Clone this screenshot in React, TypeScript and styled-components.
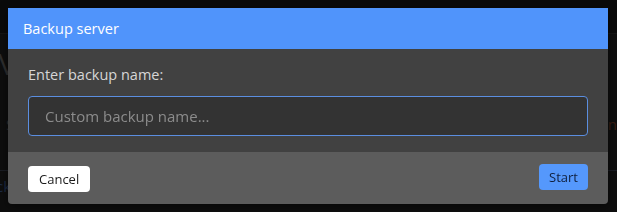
import React from "react";
import styled, { createGlobalStyle } from "styled-components";

const GlobalStyle = createGlobalStyle`
  html, body {
    margin: 0;
    padding: 0;
    background: #0c0c0c;
    font-family: "Open Sans", "Noto Sans", "Liberation Sans", sans-serif;
    overflow: hidden;
  }
`;

// dimmed page that sits behind the dialog
const Page = styled.div`
  width: 617px;
  height: 212px;
  overflow: hidden;
  background: #0e0e0e;
  color: #2b2b2b;
`;

const TopBar = styled.div`
  height: 33px;
  background: #0a0a0a;
  border-bottom: 1px solid #151515;
`;

const PageTitle = styled.div`
  font-size: 30px;
  line-height: 40px;
  margin: 10px 0 0 -6px;
  color: #2e2e2e;
  white-space: nowrap;
`;

const PageRow = styled.div`
  display: flex;
  justify-content: space-between;
  font-size: 15px;
  line-height: 20px;
  margin: 30px 0 0 6px;
  color: #2c2c2c;
`;

const WarnText = styled.span`
  color: #3a1d12;
  margin-right: -8px;
`;

const TabBar = styled.div`
  display: flex;
  align-items: center;
  margin-top: 36px;
  border-top: 1px solid #1a1d24;
  height: 30px;
  font-size: 15px;
`;

const Tab = styled.div<{ $active?: boolean }>`
  padding: 0 18px 0 0;
  margin-left: ${(p) => (p.$active ? "-22px" : "0")};
  color: ${(p) => (p.$active ? "#1c2a44" : "#2a2a2a")};
  border-right: ${(p) => (p.$active ? "1px solid #1f1f1f" : "none")};
  padding-left: ${(p) => (p.$active ? "0" : "18px")};
  line-height: 30px;
  white-space: nowrap;
`;

const Overlay = styled.div`
  position: fixed;
  inset: 0;
`;

const Dialog = styled.div`
  position: absolute;
  top: 8px;
  left: 8px;
  width: 600px;
  border-radius: 0 0 4px 4px;
  overflow: hidden;
  box-shadow: 0 2px 10px rgba(0, 0, 0, 0.5);
`;

const Header = styled.div`
  height: 41px;
  display: flex;
  align-items: center;
  padding: 0 15px;
  background: #5094fb;
  color: #ffffff;
  font-size: 14.5px;
`;

const Body = styled.div`
  background: #414141;
  padding: 16px 20px 16px;
  display: flex;
  flex-direction: column;
  gap: 11px;
`;

const Label = styled.label`
  color: #d6d6d6;
  font-size: 14.5px;
  line-height: 20px;
`;

const Input = styled.input`
  box-sizing: border-box;
  height: 40px;
  width: 100%;
  padding: 0 16px;
  background: #333333;
  border: 1px solid #5b8ee0;
  border-radius: 4px;
  color: #e0e0e0;
  font-family: inherit;
  font-size: 15px;
  outline: none;

  &::placeholder {
    color: #8c8c8c;
  }
`;

const Footer = styled.div`
  height: 52px;
  box-sizing: border-box;
  background: #5c5c5c;
  display: flex;
  align-items: center;
  justify-content: space-between;
  padding: 0 20px;
`;

const Button = styled.button<{ $primary?: boolean }>`
  height: 26px;
  padding: 0 ${(p) => (p.$primary ? "10px" : "11px")};
  border: none;
  border-radius: 4px;
  font-family: inherit;
  font-size: 13px;
  cursor: pointer;
  background: ${(p) => (p.$primary ? "#5598fc" : "#ffffff")};
  color: ${(p) => (p.$primary ? "#0f1f3d" : "#1a1a1a")};
  margin-top: ${(p) => (p.$primary ? "-2px" : "2px")};
`;

const App: React.FC = () => {
  return (
    <>
      <GlobalStyle />
      <Page>
        <TopBar />
        <PageTitle>Manage server</PageTitle>
        <PageRow>
          <span>Settings</span>
          <WarnText>Warning</WarnText>
        </PageRow>
        <TabBar>
          <Tab $active>Backup</Tab>
          <Tab>Manual backup per 24 hours: 1 / 100</Tab>
        </TabBar>
      </Page>
      <Overlay>
        <Dialog>
          <Header>Backup server</Header>
          <Body>
            <Label htmlFor="backup-name">Enter backup name:</Label>
            <Input id="backup-name" placeholder="Custom backup name..." />
          </Body>
          <Footer>
            <Button>Cancel</Button>
            <Button $primary>Start</Button>
          </Footer>
        </Dialog>
      </Overlay>
    </>
  );
};

export default App;
